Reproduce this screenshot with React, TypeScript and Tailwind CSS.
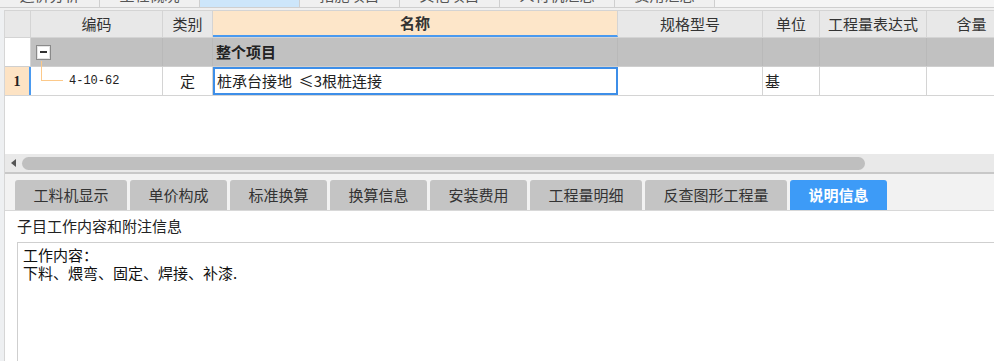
import React from 'react'

const topTabs = [
  { label: '造价分析', w: 'w-[100px]' },
  { label: '工程概况', w: 'w-[100px]' },
  { label: '分部分项', w: 'w-[100px]', active: true },
  { label: '措施项目', w: 'w-[100px]' },
  { label: '其他项目', w: 'w-[100px]' },
  { label: '人材机汇总', w: 'w-[115px]' },
  { label: '费用汇总', w: 'w-[100px]' },
]

const bottomTabs = [
  { label: '工料机显示', w: 'w-[112px]' },
  { label: '单价构成', w: 'w-[97px]' },
  { label: '标准换算', w: 'w-[97px]' },
  { label: '换算信息', w: 'w-[97px]' },
  { label: '安装费用', w: 'w-[97px]' },
  { label: '工程量明细', w: 'w-[112px]' },
  { label: '反查图形工程量', w: 'w-[142px]' },
  { label: '说明信息', w: 'w-[97px]', active: true },
]

export default function App() {
  return (
    <div className="w-[994px] h-[361px] overflow-hidden bg-white flex flex-col font-['Noto_Sans_CJK_SC','Noto_Sans',sans-serif] text-[15px] text-[#333]">
      {/* 顶部页签（被截断） */}
      <div className="h-[8px] flex bg-[#f5f5f5] border-b border-[#cfcfcf] shrink-0">
        {topTabs.map((t) => (
          <div
            key={t.label}
            className={`${t.w} h-full overflow-hidden border-r border-[#cfcfcf] text-center ${t.active ? 'bg-[#cde6fa] text-[#cde6fa]' : 'bg-[#f0f0f0] text-[#555]'}`}
          >
            <div className="leading-[15px] -mt-[13px] whitespace-nowrap">{t.label}</div>
          </div>
        ))}
      </div>
      <div className="h-[2px] bg-[#f0f0f0] shrink-0" />

      <div className="flex-1 flex min-h-0">
        {/* 左侧窄条 */}
        <div className="w-[5px] shrink-0 bg-[#eef0f2] border-r border-[#d6d6d6]" />

        <div className="flex-1 flex flex-col min-w-0">
          {/* 表格 */}
          <div className="flex flex-col border-t border-[#d4d4d4]">
            {/* 表头 */}
            <div className="flex h-[27px] bg-[#e8e8e8] border-b border-[#d4d4d4] text-[#333]">
              <div className="w-[26px] shrink-0 border-r border-[#d4d4d4]" />
              <div className="w-[132px] shrink-0 border-r border-[#d4d4d4] flex items-center justify-center">编码</div>
              <div className="w-[50px] shrink-0 border-r border-[#d4d4d4] flex items-center justify-center">类别</div>
              <div className="w-[405px] shrink-0 border-r border-[#d4d4d4] flex items-center justify-center font-bold bg-[#fde6c9] border-b-2 border-b-[#4a9af0]">名称</div>
              <div className="w-[145px] shrink-0 border-r border-[#d4d4d4] flex items-center justify-center">规格型号</div>
              <div className="w-[57px] shrink-0 border-r border-[#d4d4d4] flex items-center justify-center">单位</div>
              <div className="w-[107px] shrink-0 border-r border-[#d4d4d4] flex items-center justify-center">工程量表达式</div>
              <div className="w-[90px] shrink-0 border-r border-[#d4d4d4] flex items-center justify-center">含量</div>
            </div>

            {/* 整个项目 */}
            <div className="flex h-[29px] border-b border-[#cfcfcf]">
              <div className="w-[26px] shrink-0 bg-white border-r border-[#d4d4d4]" />
              <div className="w-[132px] shrink-0 bg-[#c1c1c1] border-r border-[#b9b9b9] flex items-center pl-[5px]">
                <div className="w-[15px] h-[15px] bg-white border border-[#8a8a8a] flex items-center justify-center shadow-[inset_0_0_0_1px_#e4e4e4]">
                  <div className="w-[7px] h-[1.5px] bg-[#333]" />
                </div>
              </div>
              <div className="w-[50px] shrink-0 bg-[#c1c1c1] border-r border-[#b9b9b9]" />
              <div className="w-[405px] shrink-0 bg-[#c1c1c1] border-r border-[#b9b9b9] flex items-center pl-[3px] font-bold text-[#222]">整个项目</div>
              <div className="w-[145px] shrink-0 bg-[#c1c1c1] border-r border-[#b9b9b9]" />
              <div className="w-[57px] shrink-0 bg-[#c1c1c1] border-r border-[#b9b9b9]" />
              <div className="w-[107px] shrink-0 bg-[#c1c1c1] border-r border-[#b9b9b9]" />
              <div className="flex-1 bg-[#c1c1c1]" />
            </div>

            {/* 第1行 */}
            <div className="flex h-[29px] border-b border-[#d4d4d4]">
              <div className="w-[26px] shrink-0 bg-[#fde3c4] border-r-2 border-[#4a9af0] flex items-center justify-center font-['Liberation_Serif',serif] font-bold text-[14px] text-[#222]">1</div>
              <div className="w-[132px] shrink-0 border-r border-[#d4d4d4] relative flex items-center">
                <div className="absolute left-[10px] -top-[6px] h-[20px] w-[22px] border-l border-b border-[#fcc98a]" />
                <span className="ml-[38px] font-['Liberation_Mono',monospace] text-[12px] text-[#222]">4-10-62</span>
              </div>
              <div className="w-[50px] shrink-0 border-r border-[#d4d4d4] flex items-center justify-center text-[#222]">定</div>
              <div className="w-[405px] shrink-0 border-2 border-[#3d8ee8] flex items-center pl-[2px] text-[#222] whitespace-pre">桩承台接地  ≤3根桩连接</div>
              <div className="w-[145px] shrink-0 border-r border-[#d4d4d4]" />
              <div className="w-[57px] shrink-0 border-r border-[#d4d4d4] flex items-center pl-[2px] text-[#222]">基</div>
              <div className="w-[107px] shrink-0 border-r border-[#d4d4d4]" />
              <div className="flex-1" />
            </div>
          </div>

          {/* 空白区 */}
          <div className="h-[58px] bg-white shrink-0" />

          {/* 横向滚动条 */}
          <div className="h-[20px] shrink-0 bg-[#e9e9e9] border-b-2 border-[#c8c8c8] flex items-center">
            <svg width="5" height="8" viewBox="0 0 5 8" className="ml-[6px]">
              <path d="M5 0 L0 4 L5 8 Z" fill="#555" />
            </svg>
            <div className="ml-[6px] w-[843px] h-[13px] rounded-full bg-[#bfbfbf]" />
          </div>

          {/* 下方页签 */}
          <div className="h-[37px] shrink-0 bg-[#f2f2f2] flex items-end gap-[3px] pl-[10px] border-b border-[#d8d8d8]">
            {bottomTabs.map((t) => (
              <div
                key={t.label}
                className={`${t.w} h-[30px] rounded-t-[3px] flex items-center justify-center ${t.active ? 'bg-[#3d9bf7] text-white font-bold' : 'bg-[#c4c4c4] text-[#333]'}`}
              >
                {t.label}
              </div>
            ))}
          </div>

          {/* 说明信息 */}
          <div className="flex-1 bg-white flex flex-col pl-[12px]">
            <div className="h-[31px] flex items-center text-[#222]">子目工作内容和附注信息</div>
            <div className="flex-1 border-t border-l border-[#cfcfcf] pl-[5px] pt-[3px] text-[#111] leading-[18px] whitespace-pre-line">
              {'工作内容：\n下料、煨弯、固定、焊接、补漆.'}
            </div>
          </div>
        </div>
      </div>
    </div>
  )
}
